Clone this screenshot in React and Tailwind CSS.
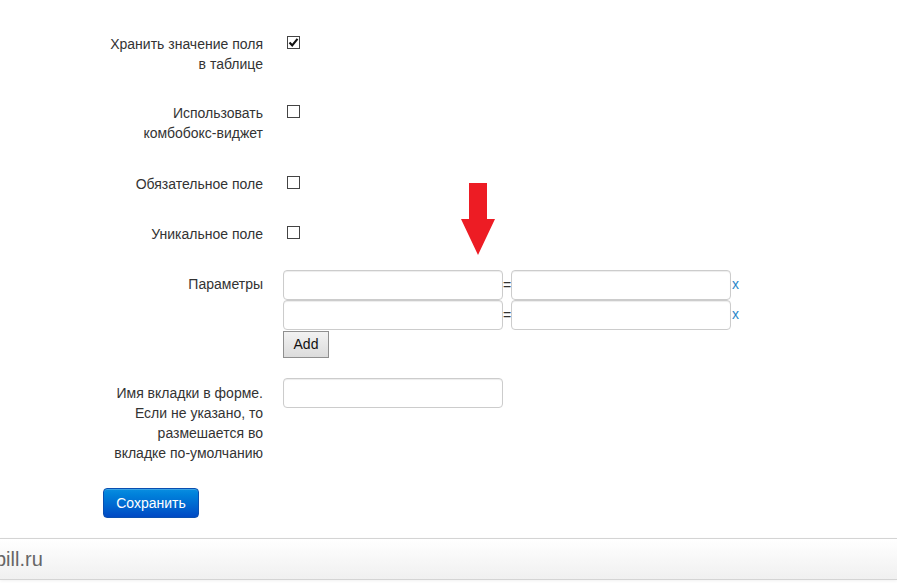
import React from "react";

function Box({ checked }) {
  return (
    <span className="mt-[2px] ml-[4px] flex h-[13px] w-[13px] items-center justify-center border border-[#444] bg-white">
      {checked && (
        <svg width="11" height="11" viewBox="0 0 11 11">
          <path d="M1.5 5.5 L4.2 8.3 L9.5 1.8" fill="none" stroke="#111" strokeWidth="2.1" />
        </svg>
      )}
    </span>
  );
}

function Label({ children, className = "" }) {
  return (
    <div className={"w-[160px] shrink-0 text-right text-[14px] leading-[20px] text-[#333] " + className}>
      {children}
    </div>
  );
}

function Input() {
  return (
    <div className="h-[30px] w-[220px] rounded-[4px] border border-[#ccc] bg-white shadow-[inset_0_1px_1px_rgba(0,0,0,0.075)]" />
  );
}

function ParamRow() {
  return (
    <div className="flex items-center">
      <Input />
      <span className="w-[8px] text-[14px] leading-[14px] text-[#333]">=</span>
      <Input />
      <span className="ml-[1px] -mt-[2px] text-[14px] leading-[14px] text-[#2a86c8]">x</span>
    </div>
  );
}

export default function App() {
  return (
    <div className="relative h-[586px] w-[897px] overflow-hidden bg-white" style={{ fontFamily: '"Liberation Sans", Arial, sans-serif' }}>
      <div className="pl-[103px]">
        <div className="mt-[34px] flex items-start gap-[20px]">
          <Label>Хранить значение поля<br />в таблице</Label>
          <Box checked />
        </div>
        <div className="mt-[29px] flex items-start gap-[20px]">
          <Label>Использовать<br />комбобокс-виджет</Label>
          <Box />
        </div>
        <div className="mt-[31px] flex items-start gap-[20px]">
          <Label>Обязательное поле</Label>
          <Box />
        </div>
        <div className="mt-[30px] flex items-start gap-[20px]">
          <Label>Уникальное поле</Label>
          <Box />
        </div>
        <div className="mt-[26px] flex items-start gap-[20px]">
          <Label className="pt-[4px]">Параметры</Label>
          <div className="flex flex-col">
            <ParamRow />
            <ParamRow />
            <button className="mt-[1px] h-[27px] w-[46px] border border-[#8f8f8f] bg-gradient-to-b from-[#f2f2f2] to-[#dcdcdc] text-[14px] text-[#111]">
              Add
            </button>
          </div>
        </div>
        <div className="mt-[20px] flex items-start gap-[20px]">
          <Label className="pt-[5px]">
            Имя вкладки в форме.<br />Если не указано, то<br />размешается во<br />вкладке по-умолчанию
          </Label>
          <Input />
        </div>
        <button className="mt-[25px] h-[30px] w-[96px] rounded-[4px] border border-[#0a4fb0] bg-gradient-to-b from-[#0a8ee0] to-[#0049c4] text-[14px] text-white shadow-[inset_0_1px_0_rgba(255,255,255,0.2)]">
          Сохранить
        </button>
      </div>

      <div className="absolute left-0 top-[538px] flex h-[42px] w-full items-center border-y border-[#d4d4d4] bg-gradient-to-b from-white to-[#f0f0f0] shadow-[0_1px_3px_rgba(0,0,0,0.06)]">
        <span className="ml-[-5px] text-[20px] text-[#666]">bill.ru</span>
      </div>

      <svg className="absolute left-[461px] top-[183px]" width="34" height="73" viewBox="0 0 34 73">
        <path d="M8 0 H26 V36 H34 L17 72 L0 36 H8 Z" fill="#ed1c24" />
      </svg>
    </div>
  );
}
